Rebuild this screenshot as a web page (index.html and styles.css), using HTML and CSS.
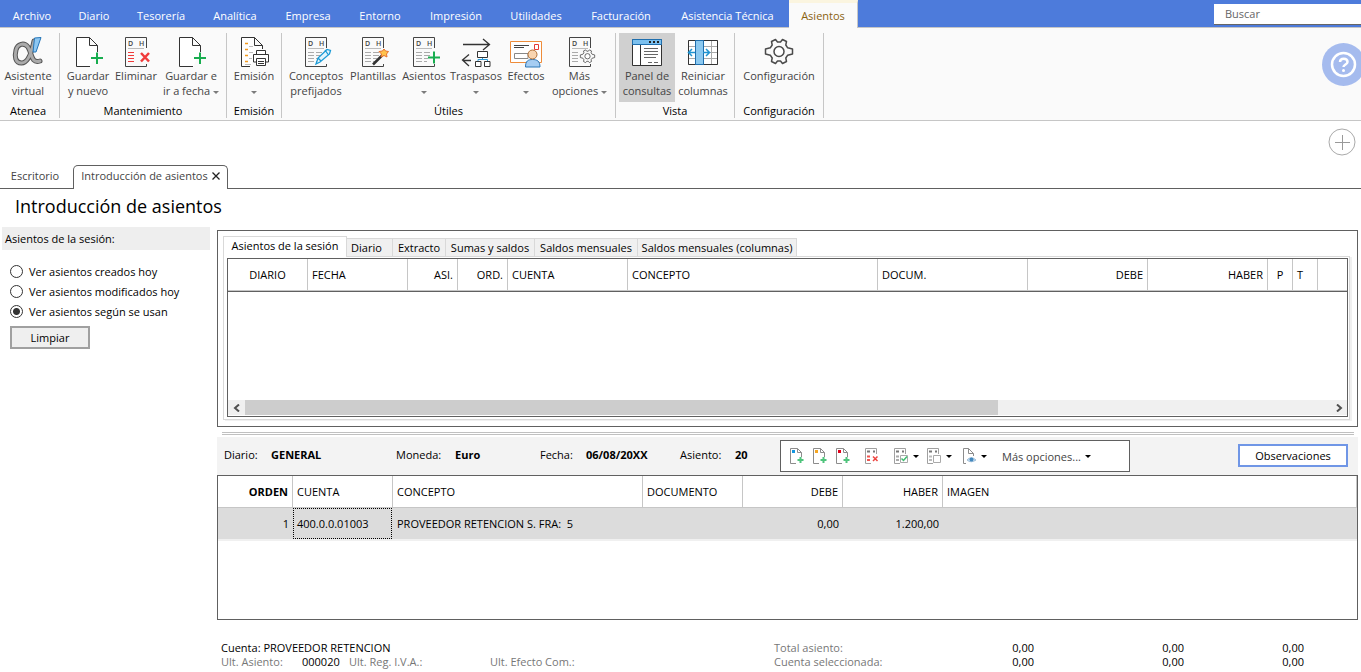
FILE: index.html
```html
<!DOCTYPE html>
<html lang="es">
<head>
<meta charset="utf-8">
<title>Introducción de asientos</title>
<link rel="stylesheet" href="styles.css">
</head>
<body>
<svg class="defs" aria-hidden="true">
  <symbol id="page-plus" viewBox="0 0 32 32">
    <path d="M18 30.500H4.500V1.500H17.500L25.500 9.500V16M17.500 1.500V9.500H25.500" fill="#fff" stroke="#333"/>
    <path d="M25 16.500V28M19 22H31" stroke="#18ad4f" stroke-width="2"/>
  </symbol>
  <symbol id="dh" viewBox="0 0 32 32">
    <path d="M26.500 12V1.500H5.500V30.500H26.500V28" fill="none" stroke="#444"/>
    <path d="M8 12.500H24" stroke="#bbb"/>
    <text x="8" y="10" class="dh-letter">D</text><text x="19" y="10" class="dh-letter">H</text>
  </symbol>
  <symbol id="dh-lines" viewBox="0 0 32 32">
    <path d="M8 16.500H14M8 19.500H14M8 22.500H14M8 25.500H14M16 16.500H22M16 19.500H22M16 22.500H20M16 25.500H19" stroke="#aaa"/>
  </symbol>
  <symbol id="gear" viewBox="0 0 32 32">
    <path d="M12.500 3.500L14.500 6H17.500L19.500 3.500L23.500 5.500L22.800 9L24.700 11.800L29.500 13V18L24.700 19.200L22.800 22L23.500 25.500L19.500 27.500L17.500 25H14.500L12.500 27.500L8.500 25.500L9.200 22L7.300 19.200L2.500 18V13L7.300 11.800L9.200 9L8.500 5.500Z" fill="#fafafa" stroke="#4a4a4a" stroke-width="1.500" stroke-linejoin="round"/>
    <circle cx="16" cy="15.500" r="5" fill="#fff" stroke="#4a4a4a" stroke-width="1.500"/>
  </symbol>
  <symbol id="mini-page" viewBox="0 0 16 16">
    <path d="M7 15.500H1.500V.5H8.500L12.500 4.500V9M8.500 .5V4.500H12.500" fill="none" stroke="#8c8c8c"/>
    <path d="M11.500 9V15M8.500 12H14.500" stroke="#4fc47c" stroke-width="2"/>
  </symbol>
  <symbol id="mini-dh" viewBox="0 0 16 16">
    <path d="M12.500 6V.5H1.500V15.500H7" fill="none" stroke="#a0a0a0"/>
    <path d="M3 3.500H6M9 3.500H11" stroke="#777" stroke-width="2"/>
  </symbol>
</svg>

<header>
  <nav class="menu">
    <a href="#" class="m-file">Archivo</a><a href="#" class="m-s">Diario</a><a href="#" class="m-l">Tesorería</a><a href="#" class="m-l">Analítica</a><a href="#" class="m-m">Empresa</a><a href="#" class="m-m">Entorno</a><a href="#" class="m-xl">Impresión</a><a href="#" class="m-xl">Utilidades</a><a href="#" class="m-xxl">Facturación</a><a href="#" class="m-wide">Asistencia Técnica</a><a href="#" class="active">Asientos</a>
    <div class="search"><input type="text" aria-label="Buscar" placeholder="Buscar"></div>
  </nav>

  <div class="ribbon">
    <section class="group">
      <div class="tools">
        <button class="tool t-56">
          <svg viewBox="0 0 32 32"><path d="M22 5C20 15 16 27 9.500 27S2.500 20 4 14S12 6 16 11C20 17 19 28 28 25" fill="none" stroke="#555" stroke-width="5" stroke-linecap="round"/><path d="M22 5C20 15 16 27 9.500 27S2.500 20 4 14S12 6 16 11C20 17 19 28 28 25" fill="none" stroke="#aaa" stroke-width="3" stroke-linecap="round"/><path d="M22.500 2L29 1.500L24 16H21Z" fill="#8dc7f2" stroke="#2676b8"/></svg>
          <span>Asistente<br>virtual</span></button>
      </div>
      <h2>Atenea</h2>
    </section>
    <section class="group">
      <div class="tools">
        <button class="tool t-48"><svg><use href="#page-plus"/></svg><span>Guardar<br>y nuevo</span></button>
        <button class="tool t-48"><svg viewBox="0 0 32 32"><use href="#dh"/><path d="M8 16.500H14M8 19.500H14M8 22.500H14M8 25.500H14" stroke="#f03b3b"/><path d="M21 17L29 25.500M29 17L21 25.500" stroke="#f03b3b" stroke-width="2.500"/></svg><span>Eliminar</span></button>
        <button class="tool t-62"><svg><use href="#page-plus"/></svg><span>Guardar e<br>ir a fecha <i class="caret"></i></span></button>
      </div>
      <h2>Mantenimiento</h2>
    </section>
    <section class="group tight">
      <div class="tools">
        <button class="tool t-48"><svg viewBox="0 0 32 32"><path d="M12 30.500H3.500V1.500H16.500L24.500 9.500V13M16.500 1.500V9.500H24.500" fill="#fff" stroke="#333"/><path d="M7 7.500H10M7 13.500H10M7 19.500H10M7 25.500H10" stroke="#f39a1e" stroke-width="1.500"/><path d="M11 10.500H15M11 16.500H15M11 22.500H14M7 28.500H13" stroke="#bbb"/><path d="M18.500 18V14.500H27.500V18M18.500 26H15.500V18.500H30.500V26H27.500M18.500 22.500H27.500V29.500H18.500ZM20 25.500H26M20 27.500H26" fill="#fff" stroke="#333"/></svg><span>Emisión<br><i class="caret"></i></span></button>
      </div>
      <h2>Emisión</h2>
    </section>
    <section class="group">
      <div class="tools">
        <button class="tool t-60"><svg viewBox="0 0 32 32"><use href="#dh"/><use href="#dh-lines"/><path d="M16 28L18 22L27 13.500L30.500 14.500L29.500 18L20 26ZM18 22L21 25M25 14L28.500 19" fill="#e3f4fc" stroke="#1a9ad6" stroke-width="1.300"/></svg><span>Conceptos<br>prefijados</span></button>
        <button class="tool t-54"><svg viewBox="0 0 32 32"><use href="#dh"/><use href="#dh-lines"/><path d="M16 28.500L26 18.500" stroke="#333" stroke-width="2.500"/><path d="M27 13L28.500 15L31.500 15.500L29.500 18L30 21L27 19.500L24 21L24.500 18L22 15.500L25.500 15Z" fill="#ffc34d" stroke="#e9722e"/></svg><span>Plantillas</span></button>
        <button class="tool t-48"><svg viewBox="0 0 32 32"><use href="#dh"/><use href="#dh-lines"/><path d="M26 15.500V27.500M20 21.500H32" stroke="#18ad4f" stroke-width="2"/></svg><span>Asientos<br><i class="caret"></i></span></button>
        <button class="tool t-56"><svg viewBox="0 0 32 32"><path d="M3 8.500H29M23 3L29.500 8.500L23 14M11 24.500H3M9 18.500L2.500 24L9 30" fill="none" stroke="#333" stroke-width="1.300"/><path d="M17.500 15.500H27.500V21.500H17.500ZM15.500 25.500H21V30.500H15.500ZM24.500 25.500H30V30.500H24.500Z" fill="#fff" stroke="#333"/><path d="M22.500 22V23.500M18 25V23.500H27.500V25" fill="none" stroke="#2a9ad8"/></svg><span>Traspasos<br><i class="caret"></i></span></button>
        <button class="tool t-44"><svg viewBox="0 0 32 32"><path d="M.5 5.500H31.500V26.500H.5Z" fill="#fff" stroke="#ee8c3a"/><path d="M4 9.500H19M4 11.500H14" stroke="#444"/><path d="M4.500 17.500H18V22.500H4.500Z" fill="none" stroke="#888"/><path d="M24.500 8.500H28.500V13.500H24.500Z" fill="#fff" stroke="#e53935"/><path d="M15.500 31C15.500 25 18 23.500 22.500 23.500S30 25 30 31Z" fill="#a6cdf2" stroke="#2d78b8"/><circle cx="22.500" cy="18.500" r="4.500" fill="#f9d5b0" stroke="#b06f36"/></svg><span>Efectos<br><i class="caret"></i></span></button>
        <button class="tool t-63"><svg viewBox="0 0 32 32"><use href="#dh"/><path d="M8 16.500H14M8 19.500H14M8 22.500H14M8 25.500H14" stroke="#aaa"/><use href="#gear" x="15" y="12" width="17" height="17"/></svg><span>Más<br>opciones <i class="caret"></i></span></button>
      </div>
      <h2>Útiles</h2>
    </section>
    <section class="group tight">
      <div class="tools">
        <button class="tool t-56 pressed"><svg viewBox="0 0 32 32"><path d="M1.500 3.500H30.500V29.500H1.500Z" fill="#fff" stroke="#333"/><path d="M1.500 3.500H30.500V8.500H1.500Z" fill="#7cc0ee" stroke="#1f6fae"/><path d="M18 6H20M22 6H24M26 6H28" stroke="#222" stroke-width="2"/><path d="M9.500 9V29" stroke="#333"/><path d="M13 12.500H27M13 15.500H27M13 18.500H27M13 21.500H25M17 26.500H21M23 26.500H27" stroke="#666"/></svg><span>Panel de<br>consultas</span></button>
        <button class="tool t-56"><svg viewBox="0 0 32 32"><path d="M1.500 4.500H30.500V28.500H1.500ZM1.500 10.500H30.500M1.500 16.500H30.500M1.500 22.500H30.500M24.500 4V28" fill="#fff" stroke="#aaa"/><path d="M1.500 4.500H30.500V28.500H1.500Z" fill="none" stroke="#333"/><path d="M8.500 4.500H16.500V28.500H8.500Z" fill="#8cc9f0" stroke="#1f6fae"/><path d="M8 16.500H2M5 13L1.500 16.500L5 20M16 16.500H22M19 13L22.500 16.500L19 20" fill="none" stroke="#1f93d1" stroke-width="1.500"/></svg><span>Reiniciar<br>columnas</span></button>
      </div>
      <h2>Vista</h2>
    </section>
    <section class="group tight">
      <div class="tools">
        <button class="tool t-82"><svg><use href="#gear"/></svg><span>Configuración</span></button>
      </div>
      <h2>Configuración</h2>
    </section>
    <button class="help" aria-label="Ayuda"><svg viewBox="0 0 43 43"><circle cx="21.500" cy="21.500" r="21.500" fill="#a5bbee"/><circle cx="21.500" cy="21.500" r="11.500" fill="none" stroke="#fff" stroke-width="2.500"/><path d="M18 19C18 14.500 25.500 14.500 25.500 19C25.500 21.500 21.500 21.500 21.500 24" fill="none" stroke="#fff" stroke-width="2.500"/><circle cx="21.500" cy="27.500" r="1.500" fill="#fff"/></svg></button>
  </div>
</header>

<div class="doc-bar">
  <button class="add" aria-label="Añadir"><svg viewBox="0 0 28 28"><circle cx="14" cy="14" r="13" fill="none" stroke="#aaa"/><path d="M7 14.500H22M14.500 7V22" stroke="#999"/></svg></button>
  <div class="doc-tabs">
    <a href="#" class="doc-tab">Escritorio</a>
    <div class="doc-tab open"><a href="#">Introducción de asientos</a><button aria-label="Cerrar"><svg viewBox="0 0 8 8"><path d="M.5 .5L7.500 7.500M7.500 .5L.5 7.500" stroke="#222" stroke-width="1.300"/></svg></button></div>
    <div class="rule"></div>
  </div>
</div>
<h1>Introducción de asientos</h1>

<main>
  <aside>
    <h2>Asientos de la sesión:</h2>
    <form>
      <label><input type="radio" name="ver">Ver asientos creados hoy</label>
      <label><input type="radio" name="ver">Ver asientos modificados hoy</label>
      <label><input type="radio" name="ver" checked>Ver asientos según se usan</label>
      <button type="button">Limpiar</button>
    </form>
  </aside>

  <div class="work">
    <section class="queries">
      <div class="query-tabs">
        <button class="q-first">Asientos de la sesión</button><button class="q-46">Diario</button><button class="q-53">Extracto</button><button class="q-89">Sumas y saldos</button><button class="q-103">Saldos mensuales</button><button class="q-159">Saldos mensuales (columnas)</button>
      </div>
      <div class="query-page">
        <div class="sheet">
          <table class="session">
            <colgroup><col class="c80"><col class="c100"><col class="c50"><col class="c50"><col class="c120"><col class="c250"><col class="c150"><col class="c120"><col class="c120"><col class="c25"><col class="c25"><col></colgroup>
            <thead><tr><th class="mid">DIARIO</th><th>FECHA</th><th class="num">ASI.</th><th class="num">ORD.</th><th>CUENTA</th><th>CONCEPTO</th><th>DOCUM.</th><th class="num">DEBE</th><th class="num">HABER</th><th class="mid">P</th><th>T</th><th></th></tr></thead>
          </table>
          <div class="scroll">
            <button aria-label="Desplazar a la izquierda"><svg viewBox="0 0 8 8"><path d="M6 .5L2 4L6 7.500" fill="none" stroke="#505050" stroke-width="2"/></svg></button>
            <div class="track"><div class="thumb"></div></div>
            <button aria-label="Desplazar a la derecha"><svg viewBox="0 0 8 8"><path d="M2 .5L6 4L2 7.500" fill="none" stroke="#505050" stroke-width="2"/></svg></button>
          </div>
        </div>
      </div>
    </section>
    <div class="splitter"></div>
    <section class="entry-bar">
      <span>Diario:</span><b>GENERAL</b><span>Moneda:</span><b>Euro</b><span>Fecha:</span><b>06/08/20XX</b><span>Asiento:</span><b>20</b>
      <div class="actions">
        <button aria-label="Nuevo apunte"><svg viewBox="0 0 16 16"><use href="#mini-page"/><path d="M3 2H6V5H3Z" fill="#1296e0"/></svg></button>
        <button aria-label="Insertar apunte"><svg viewBox="0 0 16 16"><use href="#mini-page"/><path d="M3 2H6V5H3Z" fill="#f5a623"/></svg></button>
        <button aria-label="Duplicar apunte"><svg viewBox="0 0 16 16"><use href="#mini-page"/><path d="M3 2H6V5H3Z" fill="#e3001b"/></svg></button>
        <button class="gap" aria-label="Eliminar apunte"><svg viewBox="0 0 16 16"><use href="#mini-dh"/><path d="M3 8.500H6M3 12H6" stroke="#f0544f" stroke-width="2"/><path d="M9 8.500L13.500 13M13.500 8.500L9 13" stroke="#ee4540" stroke-width="1.500"/></svg></button>
        <button class="gap" aria-label="Marcar"><svg viewBox="0 0 16 16"><use href="#mini-dh"/><path d="M3 8.500H6M3 12H6" stroke="#aaa" stroke-width="2"/><path d="M7.500 7.500H14.500V14.500H7.500Z" fill="#fff" stroke="#aaa"/><path d="M8.500 10.500L10.500 12.500L14 8.500" fill="none" stroke="#3fbd70" stroke-width="1.500"/></svg><i class="caret"></i></button>
        <button aria-label="Desmarcar"><svg viewBox="0 0 16 16"><use href="#mini-dh"/><path d="M3 8.500H6M3 12H6" stroke="#bbb" stroke-width="2"/><path d="M7.500 7.500H14.500V14.500H7.500Z" fill="#fff" stroke="#aaa"/></svg><i class="caret"></i></button>
        <button class="view" aria-label="Ver documento"><svg viewBox="0 0 16 16"><path d="M5 15.500H2.500V.5H7.500L12.500 5.500V8M7.500 .5V5.500H12.500" fill="none" stroke="#8c8c8c"/><path d="M6 12Q10 7.500 15 12Q10 15.500 6 12Z" fill="#c9e1f3" stroke="#9dbdd8"/><circle cx="10.500" cy="11.500" r="2" fill="#4388be"/></svg><i class="caret"></i></button>
        <button class="more">Más opciones...<i class="caret"></i></button>
      </div>
      <button class="notes">Observaciones</button>
    </section>
    <div class="entries">
      <table>
        <colgroup><col class="c75"><col class="c100"><col class="c250"><col class="c100"><col class="c100"><col class="c100"><col></colgroup>
        <thead><tr><th class="num strong">ORDEN</th><th>CUENTA</th><th>CONCEPTO</th><th>DOCUMENTO</th><th class="num">DEBE</th><th class="num">HABER</th><th>IMAGEN</th></tr></thead>
        <tbody><tr><td class="num">1</td><td class="cell"><span class="focus">400.0.0.01003</span></td><td>PROVEEDOR RETENCION S. FRA:&nbsp; 5</td><td></td><td class="num">0,00</td><td class="num">1.200,00</td><td></td></tr></tbody>
      </table>
    </div>
    <footer>
      <span class="account">Cuenta: PROVEEDOR RETENCION</span><span class="soft">Total asiento:</span><span class="num">0,00</span><span class="num">0,00</span><span class="num">0,00</span>
      <span class="soft">Ult. Asiento:</span><span>000020</span><span class="soft">Ult. Reg. I.V.A.:</span><span class="soft">Ult. Efecto Com.:</span><span class="soft">Cuenta seleccionada:</span><span class="num">0,00</span><span class="num">0,00</span><span class="num">0,00</span>
    </footer>
  </div>
</main>
</body>
</html>
```
FILE: styles.css
```css
* { box-sizing: border-box; }
body {
  margin: 0;
  min-height: 100vh;
  display: flex;
  flex-direction: column;
  background: #fff;
  color: #000;
  font: 11px/15px "Open Sans", "Noto Sans", sans-serif;
  overflow-x: hidden;
}
button, input { font: inherit; color: inherit; }
button { border: 0; padding: 0; background: none; }
a { color: inherit; text-decoration: none; }
h1, h2 { margin: 0; font-weight: 400; }
.defs { display: none; }
.dh-letter { font: 600 7px "Open Sans", sans-serif; fill: #444; }
.caret {
  display: inline-block;
  width: 0;
  height: 0;
  border: 3px solid transparent;
  border-top-color: currentColor;
  border-bottom-width: 0;
  vertical-align: middle;
}

/* Menu */
.menu {
  display: flex;
  height: 28px;
  background: #4d7bdb;
  border-bottom: 1px solid #c6c6c6;
  color: #fff;
}
.menu a { padding-top: 8px; text-align: center; white-space: nowrap; }
.menu .m-file { width: 64px; }
.menu .m-s { width: 60px; }
.menu .m-m { width: 72px; }
.menu .m-l { width: 74px; }
.menu .m-xl { width: 80px; }
.menu .m-xxl { width: 90px; }
.menu .m-wide { width: 123px; }
.menu .active {
  width: 69px;
  height: 28px;
  margin-right: auto;
  padding-top: 5px;
  background: #fafafa;
  border-top: 3px solid #fbf5e0;
  border-right: 1px solid #c6c6c6;
  color: #8a6210;
  font-weight: 500;
}
.search { width: 147px; padding-top: 4px; }
.search input {
  display: block;
  width: 100%;
  height: 21px;
  border: 0;
  border-bottom: 1px solid #666;
  padding: 0 11px 2px;
  background: #fff;
  outline: 0;
}
.search input::placeholder { color: #666; opacity: 1; }

/* Ribbon */
.ribbon {
  display: flex;
  height: 93px;
  padding: 5px 0 2px;
  background: #fafafa;
  border-bottom: 1px solid #c6c6c6;
}
.group {
  display: flex;
  flex-direction: column;
  justify-content: space-between;
  padding: 0 4px;
  border-right: 1px solid #c6c6c6;
  text-align: center;
}
.group:first-child { padding: 0 3px 0 0; }
.group.tight { padding: 0 3px; }
.tools { display: flex; }
.tool { display: flex; flex-direction: column; align-items: center; height: 69px; padding-top: 3px; color: #444; white-space: nowrap; }
.tool svg { width: 32px; height: 32px; }
.tool .caret { opacity: .7; }
.tool.pressed { background: #d0d0d0; }
.t-44 { width: 44px; }
.t-48 { width: 48px; }
.t-54 { width: 54px; }
.t-56 { width: 56px; }
.t-60 { width: 60px; }
.t-62 { width: 62px; }
.t-63 { width: 63px; }
.t-82 { width: 82px; }
.group h2 { font-size: 11px; line-height: 15px; }
.help { width: 43px; margin: 10px -4px 0 auto; align-self: flex-start; }
.help svg { display: block; height: 43px; }

/* Document tabs */
.doc-bar { display: flex; flex-direction: column; padding-top: 7px; }
.add { width: 28px; height: 28px; margin-right: 5px; align-self: flex-end; }
.add svg { display: block; }
.doc-tabs { display: flex; height: 24px; margin-top: 9px; color: #444; }
.doc-tab { width: 73px; padding-top: 3px; text-align: center; border-bottom: 1px solid #606060; }
a.doc-tab { padding-right: 3px; }
.doc-tab.open {
  display: flex;
  gap: 4px;
  justify-content: center;
  width: 155px;
  padding-top: 2px;
  border: 1px solid #606060;
  border-bottom: 0;
  border-radius: 5px 5px 0 0;
}
.doc-tab button { width: 8px; height: 16px; }
.doc-tab svg { display: block; width: 8px; height: 8px; }
.rule { flex: 1; border-bottom: 1px solid #606060; }
h1 { padding: 5px 15px 9px; font-size: 18px; line-height: 24px; }

/* Main area */
main { flex: 1; display: flex; gap: 7px; padding: 0 3px 0 2px; }
aside { width: 208px; flex: none; }
aside h2 { height: 23px; padding: 4px 3px; background: #eee; font-size: 11px; line-height: 15px; }
form { display: flex; flex-direction: column; align-items: flex-start; padding: 11px 8px; }
form label { display: flex; align-items: center; gap: 6px; height: 20px; }
form input {
  appearance: none;
  width: 13px;
  height: 13px;
  margin: 0;
  border: 1px solid #333;
  border-radius: 50%;
  background: #fff;
}
form input:checked { background: radial-gradient(circle, #333 0 3px, #fff 4px); }
form button { width: 80px; height: 23px; margin-top: 5px; border: 2px solid #a0a0a0; background: #efefef; }

.work { flex: 1; min-width: 0; display: flex; flex-direction: column; padding-top: 3px; }
.queries { padding: 5px 7px 6px 5px; border: 1px solid #606060; }
.query-tabs { display: flex; align-items: flex-end; }
.query-tabs button {
  height: 18px;
  border: 1px solid #d9d9d9;
  border-width: 1px 1px 0 0;
  background: #f0f0f0;
  white-space: nowrap;
}
.query-tabs .q-first {
  z-index: 1;
  width: 124px;
  height: 21px;
  margin-bottom: -1px;
  padding-bottom: 3px;
  border-left-width: 1px;
  background: #fff;
}
.q-46 { width: 46px; padding-right: 6px; }
.q-53 { width: 53px; }
.q-89 { width: 89px; }
.q-103 { width: 103px; }
.q-159 { width: 159px; }
.query-page { padding: 1px 1px 2px 3px; border: 1px solid #d9d9d9; box-shadow: 2px 1px 0 #f0f0f0; }
.sheet { display: flex; flex-direction: column; height: 159px; border: 1px solid #606060; }
table { width: 100%; border-collapse: separate; border-spacing: 0; table-layout: fixed; }
th, td { height: 32px; padding: 0 4px; text-align: left; font-weight: 400; white-space: nowrap; }
th { border-right: 1px solid #c6c6c6; border-bottom: 1px solid #c6c6c6; }
th.num, td.num { text-align: right; }
th.mid { text-align: center; }
th.strong { font-weight: 700; }
.session { border-bottom: 1px solid #606060; }
.session th:last-child { border-right: 0; }
.c25 { width: 25px; }
.c50 { width: 50px; }
.c75 { width: 75px; }
.c80 { width: 80px; }
.c100 { width: 100px; }
.c120 { width: 120px; }
.c150 { width: 150px; }
.c250 { width: 250px; }
.scroll { display: flex; height: 16px; margin-top: auto; border-bottom: 1px solid #fff; background: #f0f0f0; }
.scroll button { display: grid; place-items: center; width: 17px; }
.scroll svg { width: 8px; height: 8px; }
.track { flex: 1; }
.thumb { width: calc(100% * 25 / 36); height: 15px; background: #cdcdcd; }

.splitter { height: 3px; margin: 5px 4px 2px 5px; border: 1px solid #c0c0c0; border-width: 1px 0; }
.entry-bar {
  display: grid;
  grid-template-columns: 47px 125px 59px 85px 46px 94px 55px 45px 350px 1fr;
  align-items: center;
  height: 38px;
  padding: 0 10px 0 7px;
  background: #f3f3f3;
  white-space: nowrap;
}
.entry-bar > span, .entry-bar > b { padding-bottom: 3px; }
.actions { display: flex; align-items: center; height: 32px; padding: 0 8px; border: 1px solid #606060; background: #fff; color: #444; }
.actions button { display: flex; align-items: center; gap: 4px; margin-right: 7px; }
.actions svg { width: 16px; height: 16px; }
.actions .caret { color: #000; }
.actions .gap { margin-left: 6px; }
.actions .view { margin: 0 15px 0 2px; }
.notes { justify-self: end; width: 110px; height: 23px; margin-bottom: 2px; border: 2px solid #7096e6; background: #fff; }
.entries { flex: 1; min-height: 145px; border: 1px solid #606060; }
.entries tbody td { height: 33px; background: #dcdcdc; border-bottom: 2px solid #f0f0f0; }
.entries .cell { padding: 0; }
.focus { display: block; height: 31px; margin-right: 1px; padding: 0 3px; border: 1px dotted #000; line-height: 29px; }
footer {
  display: grid;
  grid-template-columns: 81px 47px 141px 284px 160px 100px 150px 120px;
  padding: 21px 4px 3px;
  line-height: 14px;
  white-space: nowrap;
}
.account { grid-column: span 4; }
footer .num { text-align: right; }
.soft { color: #777; }
```
